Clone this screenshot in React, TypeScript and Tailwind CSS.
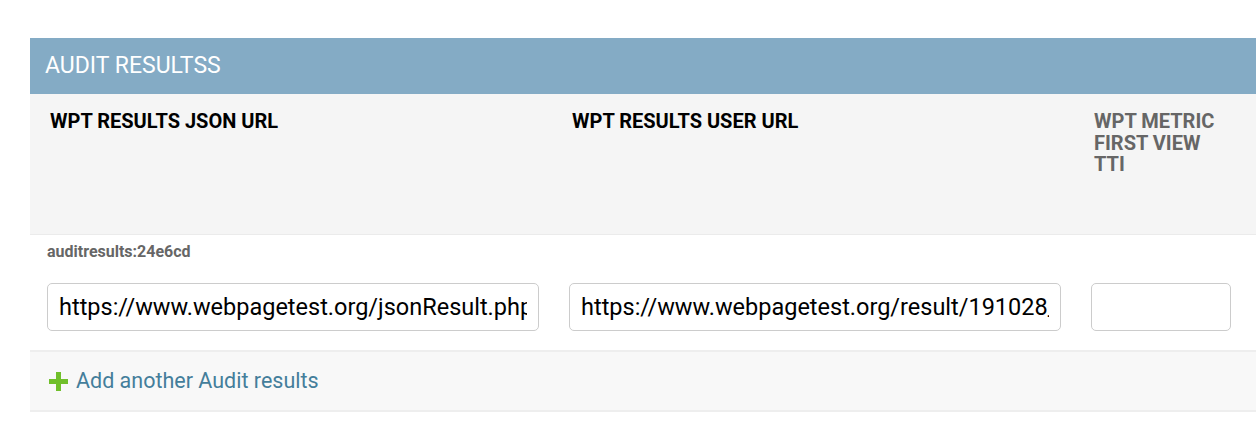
export default function App() {
  return (
    <div className="w-[1256px] h-[444px] overflow-hidden bg-white pt-[38px] pl-[30px] font-['Roboto','Liberation_Sans',sans-serif]">
      <div className="w-[1300px]">
        {/* module caption */}
        <div className="h-[56px] bg-[#84abc5] flex items-center pl-[15px]">
          <h2 className="text-[23px] text-white">AUDIT RESULTSS</h2>
        </div>

        {/* header row */}
        <div className="h-[141px] bg-[#f5f5f5] grid grid-cols-[522px_522px_200px] border-b border-[#ebebeb]">
          <div className="pl-[20px] pt-[17px] text-[20px] font-bold leading-[21.5px] text-black">
            WPT RESULTS JSON URL
          </div>
          <div className="pl-[20px] pt-[17px] text-[20px] font-bold leading-[21.5px] text-black">
            WPT RESULTS USER URL
          </div>
          <div className="pl-[20px] pt-[17px] text-[20px] font-bold leading-[21.5px] text-[#666] w-[150px]">
            WPT METRIC FIRST VIEW TTI
          </div>
        </div>

        {/* form row */}
        <div className="h-[117px] border-b-2 border-[#eee] pt-[9px]">
          <div className="pl-[17px] text-[16px] font-bold text-[#666] leading-[16px]">auditresults:24e6cd</div>
          <div className="grid grid-cols-[522px_522px_200px] mt-[23px]">
            <div className="pl-[17px]">
              <input
                readOnly
                value="https://www.webpagetest.org/jsonResult.php?test=191028_XY_abc"
                className="w-[492px] h-[48px] border border-[#ccc] rounded-[5px] px-[11px] text-[23.5px] text-black outline-none"
              />
            </div>
            <div className="pl-[17px]">
              <input
                readOnly
                value="https://www.webpagetest.org/result/191028_XY_abc/"
                className="w-[492px] h-[48px] border border-[#ccc] rounded-[5px] px-[11px] text-[23.5px] text-black outline-none"
              />
            </div>
            <div className="pl-[17px]">
              <input
                readOnly
                value=""
                className="w-[140px] h-[48px] border border-[#ccc] rounded-[5px] px-[11px] text-[23.5px] outline-none"
              />
            </div>
          </div>
        </div>

        {/* add another */}
        <div className="h-[60px] bg-[#f8f8f8] border-b-2 border-[#eee] flex items-center pl-[19px]">
          <svg width="19" height="19" viewBox="0 0 19 19" className="mr-[8px]">
            <rect x="7" y="0" width="5" height="19" fill="#70bf2b" />
            <rect x="0" y="7" width="19" height="5" fill="#70bf2b" />
          </svg>
          <span className="text-[21.5px] text-[#447e9b]">Add another Audit results</span>
        </div>
      </div>
    </div>
  );
}
